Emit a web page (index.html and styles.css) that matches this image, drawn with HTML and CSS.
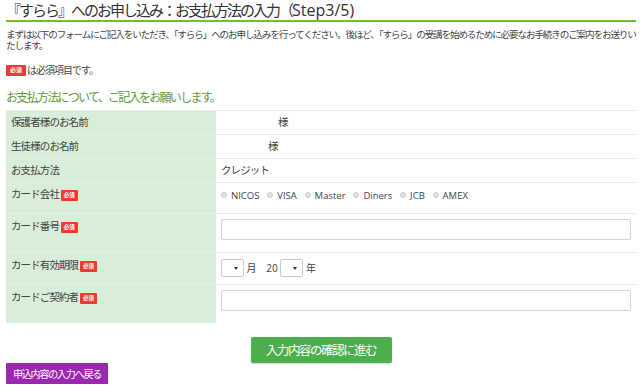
FILE: index.html
```html
<!DOCTYPE html>
<html lang="ja">

<head>
    <meta charset="UTF-8">
    <meta name="viewport" content="width=device-width, initial-scale=1.0">
    <title>お支払方法の入力</title>
    <link rel="stylesheet" href="styles.css">
</head>

<body>
    <div class="page">
        <h1 class="page-title">『すらら』へのお申し込み：お支払方法の入力（<span class="latin">Step3/5)</span></h1>
        <p class="intro">まずは以下のフォームにご記入をいただき、「すらら」へのお申し込みを行ってください。後ほど、「すらら」の受講を始めるために必要なお手続きのご案内をお送りいたします。</p>
        <p class="note"><span class="badge">必須</span>は必須項目です。</p>
        <h2 class="section-title">お支払方法について、ご記入をお願いします。</h2>

        <table class="form-table">
            <tr class="row-text">
                <th>保護者様のお名前</th>
                <td><span class="name-gap wide"></span>様</td>
            </tr>
            <tr class="row-text">
                <th>生徒様のお名前</th>
                <td><span class="name-gap"></span>様</td>
            </tr>
            <tr class="row-text">
                <th>お支払方法</th>
                <td>クレジット</td>
            </tr>
            <tr class="row-radio">
                <th>カード会社 <span class="badge small">必須</span></th>
                <td>
                    <label class="radio"><span class="dot"></span>NICOS</label>
                    <label class="radio"><span class="dot"></span>VISA</label>
                    <label class="radio"><span class="dot"></span>Master</label>
                    <label class="radio"><span class="dot"></span>Diners</label>
                    <label class="radio"><span class="dot"></span>JCB</label>
                    <label class="radio"><span class="dot"></span>AMEX</label>
                </td>
            </tr>
            <tr class="row-input">
                <th>カード番号 <span class="badge small">必須</span></th>
                <td><input class="field" type="text"></td>
            </tr>
            <tr class="row-select">
                <th>カード有効期限 <span class="badge small">必須</span></th>
                <td class="expiry">
                    <span class="select"><span class="arrow"></span></span>
                    <span>月</span>
                    <span class="year-prefix">20</span>
                    <span class="select"><span class="arrow"></span></span>
                    <span>年</span>
                </td>
            </tr>
            <tr class="row-holder">
                <th>カードご契約者 <span class="badge small">必須</span></th>
                <td><input class="field" type="text"></td>
            </tr>
        </table>

        <div class="actions">
            <button class="btn-next">入力内容の確認に進む</button>
        </div>
        <button class="btn-back">申込内容の入力へ戻る</button>
    </div>
</body>

</html>
```

FILE: styles.css
```css
* {
    margin: 0;
    padding: 0;
    box-sizing: border-box;
}

body {
    background-color: #fff;
    color: #333;
    font-family: "Open Sans", "Noto Sans CJK JP", sans-serif;
}

.page {
    padding: 0 4px 0 6px;
}

.page-title {
    font-size: 15px;
    font-weight: normal;
    letter-spacing: -2px;
    line-height: 20px;
    color: #333;
    border-bottom: 2px solid #72bf2e;
}

.page-title .latin {
    letter-spacing: 0;
    font-size: 16px;
}

.intro {
    margin-top: 7px;
    font-size: 9.6px;
    letter-spacing: -1.15px;
    line-height: 11px;
    color: #444;
}

.note {
    margin-top: 12px;
    font-size: 10px;
    letter-spacing: -1px;
    line-height: 14px;
    color: #444;
    display: flex;
    align-items: center;
}

.badge {
    display: inline-block;
    background-color: #ee3b2f;
    color: #fff;
    font-size: 6px;
    font-weight: bold;
    letter-spacing: 0;
    line-height: 11px;
    height: 11px;
    width: 20px;
    text-align: center;
    border-radius: 1px;
    margin-right: 1px;
}

.badge.small {
    width: 17px;
    height: 11px;
    line-height: 11px;
    font-size: 5.5px;
    vertical-align: 1px;
}

.section-title {
    margin-top: 13px;
    font-size: 12px;
    font-weight: normal;
    letter-spacing: -1.7px;
    line-height: 16px;
    color: #5d9a39;
}

.form-table {
    margin-top: 4px;
    width: 100%;
    border-collapse: collapse;
    font-size: 10.5px;
    letter-spacing: -0.9px;
    line-height: 13px;
    color: #444;
}

.form-table th,
.form-table td {
    text-align: left;
    font-weight: normal;
    vertical-align: top;
    padding: 5px 5px 0;
    border-top: 1px solid #e8e8e8;
}

.form-table th {
    width: 210px;
    background-color: #d8eed9;
    border-top-color: #e6f2e6;
}

.row-text th,
.row-text td {
    height: 24px;
}

.row-radio th,
.row-radio td {
    height: 31px;
}

.row-input th,
.row-input td {
    height: 39px;
    padding-top: 6px;
}

.row-select th,
.row-select td {
    height: 32px;
    padding-top: 6px;
}

.row-holder th,
.row-holder td {
    height: 38px;
    padding-top: 6px;
}

.row-input td,
.row-holder td {
    padding-top: 5px;
}

.name-gap {
    display: inline-block;
    width: 47px;
}

.name-gap.wide {
    width: 57px;
}

.radio {
    display: inline-flex;
    align-items: center;
    font-size: 9.5px;
    letter-spacing: 0;
    margin-right: 6px;
    color: #444;
}

.dot {
    width: 6px;
    height: 6px;
    border-radius: 50%;
    border: 1px solid #ccc;
    background-color: #e4e4e4;
    margin-right: 4px;
}

.field {
    display: block;
    width: 100%;
    height: 21px;
    border: 1px solid #d4d4d4;
    border-radius: 2px;
    background-color: #fff;
}

.expiry {
    font-size: 10px;
    letter-spacing: 0;
}

.expiry span {
    display: inline-block;
    vertical-align: middle;
}

.select {
    width: 23px;
    height: 18px;
    border: 1px solid #ccc;
    border-radius: 2px;
    position: relative;
}

.arrow {
    position: absolute;
    right: 5px;
    top: 7px;
    border-left: 2px solid transparent;
    border-right: 2px solid transparent;
    border-top: 3px solid #333;
}

.year-prefix {
    margin-left: 7px;
    color: #444;
}

.actions {
    margin-top: 14px;
    display: flex;
    justify-content: center;
}

.btn-next {
    width: 141px;
    height: 26px;
    border: none;
    border-radius: 2px;
    background-color: #4cae4c;
    color: #fff;
    font-family: "Open Sans", "Noto Sans CJK JP", sans-serif;
    font-size: 12.5px;
    letter-spacing: -1.5px;
    box-shadow: 0 1px 2px rgba(0, 0, 0, 0.2);
    cursor: pointer;
}

.btn-back {
    display: block;
    width: 102px;
    height: 21px;
    border: none;
    background-color: #9c27b0;
    color: #fff;
    font-family: "Open Sans", "Noto Sans CJK JP", sans-serif;
    font-size: 10px;
    letter-spacing: -1.2px;
    cursor: pointer;
}
```
